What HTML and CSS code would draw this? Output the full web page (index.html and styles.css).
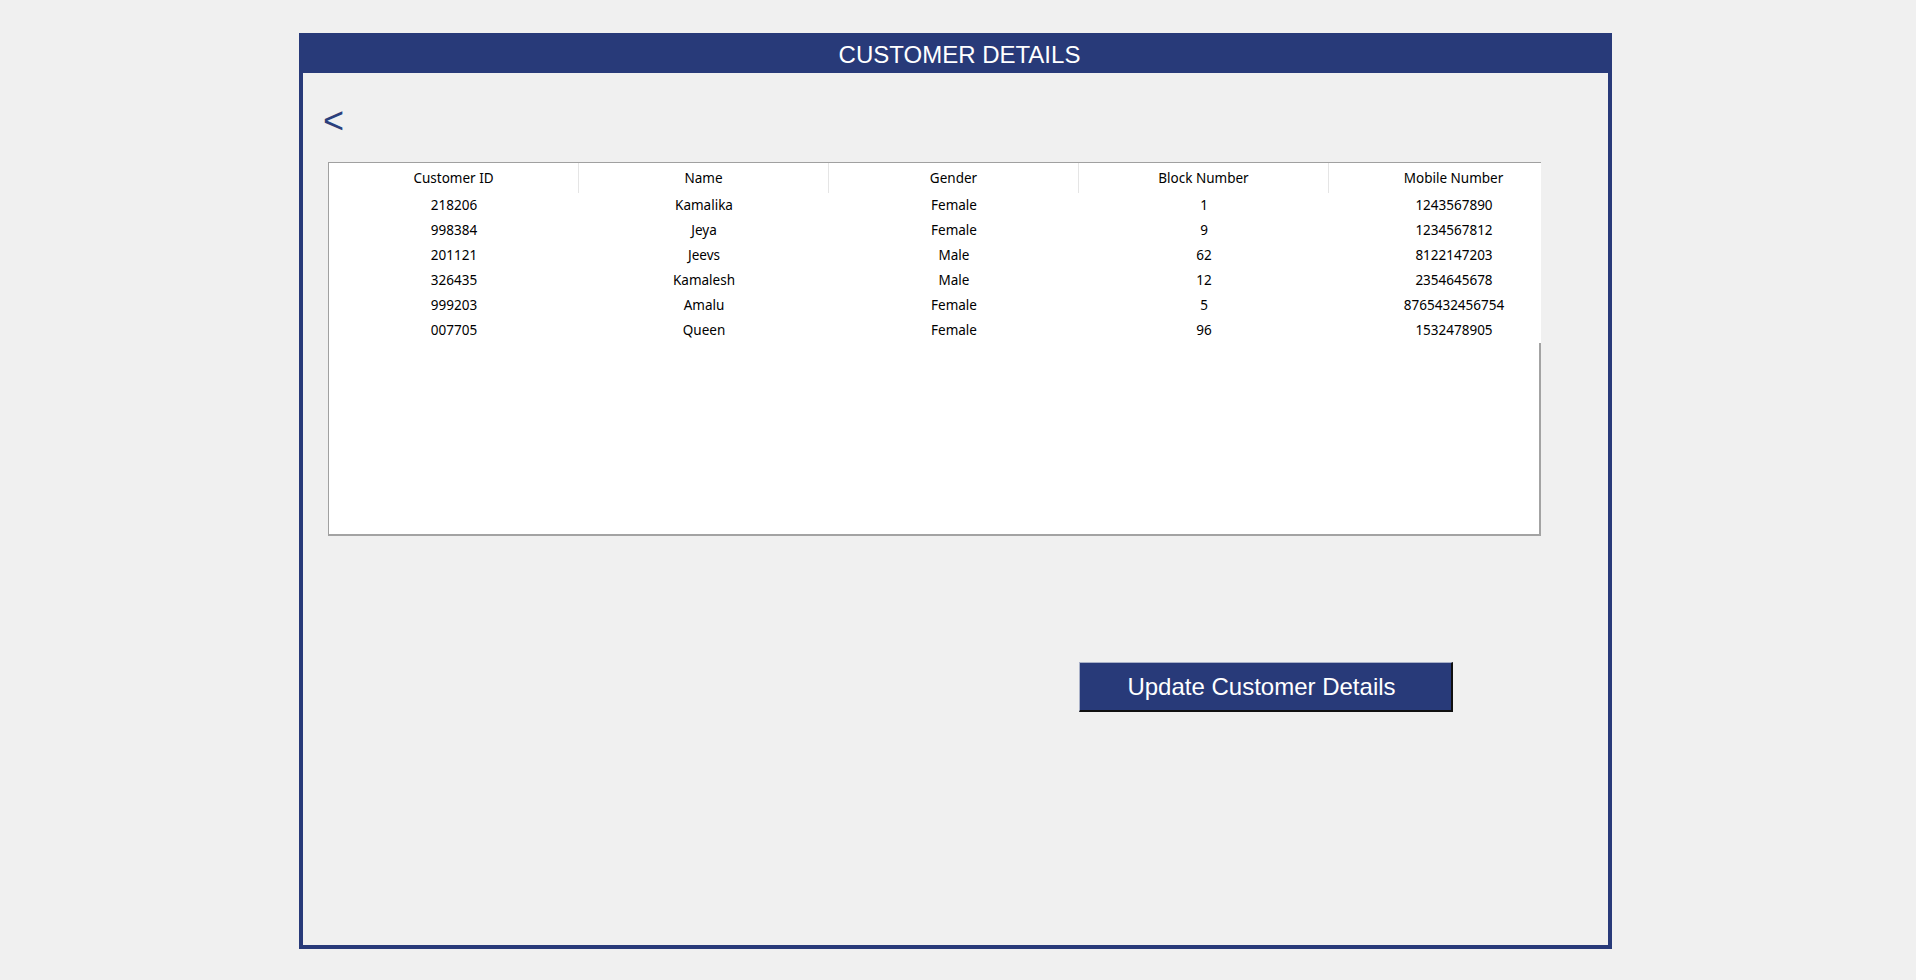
FILE: index.html
```html
<!DOCTYPE html>
<html lang="en">
<head>
<meta charset="utf-8">
<title>Customer Details</title>
<link rel="stylesheet" href="styles.css">
</head>
<body>
<div class="page">
  <div class="frame">
    <div class="frame-header">CUSTOMER DETAILS</div>
    <div class="frame-body">
      <div class="back">&lt;</div>
      <div class="list">
        <div class="list-head">
          <div class="cell hcell">Customer ID</div>
          <div class="cell hcell">Name</div>
          <div class="cell hcell">Gender</div>
          <div class="cell hcell">Block Number</div>
          <div class="cell hcell">Mobile Number</div>
        </div>
        <div class="list-row"><div class="cell">218206</div><div class="cell">Kamalika</div><div class="cell">Female</div><div class="cell">1</div><div class="cell">1243567890</div></div>
        <div class="list-row"><div class="cell">998384</div><div class="cell">Jeya</div><div class="cell">Female</div><div class="cell">9</div><div class="cell">1234567812</div></div>
        <div class="list-row"><div class="cell">201121</div><div class="cell">Jeevs</div><div class="cell">Male</div><div class="cell">62</div><div class="cell">8122147203</div></div>
        <div class="list-row"><div class="cell">326435</div><div class="cell">Kamalesh</div><div class="cell">Male</div><div class="cell">12</div><div class="cell">2354645678</div></div>
        <div class="list-row"><div class="cell">999203</div><div class="cell">Amalu</div><div class="cell">Female</div><div class="cell">5</div><div class="cell">8765432456754</div></div>
        <div class="list-row"><div class="cell">007705</div><div class="cell">Queen</div><div class="cell">Female</div><div class="cell">96</div><div class="cell">1532478905</div></div>
        <div class="list-fill"></div>
      </div>
      <div class="actions">
        <button class="update-btn" type="button">Update Customer Details</button>
      </div>
    </div>
  </div>
</div>
</body>
</html>
```
FILE: styles.css
```css
html, body {
  margin: 0;
  padding: 0;
  background: #f0f0f0;
}

.page {
  padding-top: 33px;
  padding-left: 299px;
}

.frame {
  width: 1313px;
}

.frame-header {
  height: 40px;
  box-sizing: border-box;
  padding-top: 3px;
  padding-left: 8px;
  line-height: 37px;
  background: #283a79;
  color: #ffffff;
  text-align: center;
  font-family: "Liberation Sans", Arial, sans-serif;
  font-size: 24px;
}

.frame-body {
  height: 876px;
  box-sizing: border-box;
  border: 4px solid #283a79;
  border-top: 0;
  background: #f0f0f0;
  padding: 27px 20px 0 20px;
}

.back {
  height: 41px;
  line-height: 1.15;
  font-family: "Liberation Sans", Arial, sans-serif;
  font-size: 36px;
  color: #2b3f7c;
}

.list {
  margin-top: 21px;
  margin-left: 5px;
  width: 1213px;
  height: 374px;
  box-sizing: border-box;
  border-top: 1px solid #a0a0a0;
  border-left: 1px solid #a0a0a0;
  border-bottom: 2px solid #a3a3a3;
  display: flex;
  flex-direction: column;
  overflow: hidden;
  font-family: "Noto Sans", "Open Sans", sans-serif;
  font-size: 13.5px;
  color: #000000;
}

.list-head,
.list-row {
  display: flex;
  background: #ffffff;
  flex: none;
}

.list-head {
  height: 30px;
  line-height: 30px;
}

.list-row {
  height: 25px;
  line-height: 25px;
}

.cell {
  width: 250px;
  flex: none;
  text-align: center;
  white-space: nowrap;
  box-sizing: border-box;
}

.hcell {
  border-right: 1px solid #e5e5e5;
}

.list-fill {
  flex: 1;
  background: #ffffff;
  border-right: 2px solid #a3a3a3;
}

.actions {
  margin-top: 126px;
  padding-left: 756px;
}

.update-btn {
  display: block;
  width: 374px;
  height: 50px;
  box-sizing: border-box;
  margin: 0;
  padding: 0 8px 0 0;
  background: #283a79;
  color: #ffffff;
  border-top: 1px solid #a9b1c8;
  border-left: 1px solid #a9b1c8;
  border-right: 2px solid #101010;
  border-bottom: 2px solid #101010;
  font-family: "Liberation Sans", Arial, sans-serif;
  font-size: 24px;
  line-height: 46px;
  text-align: center;
}
```
